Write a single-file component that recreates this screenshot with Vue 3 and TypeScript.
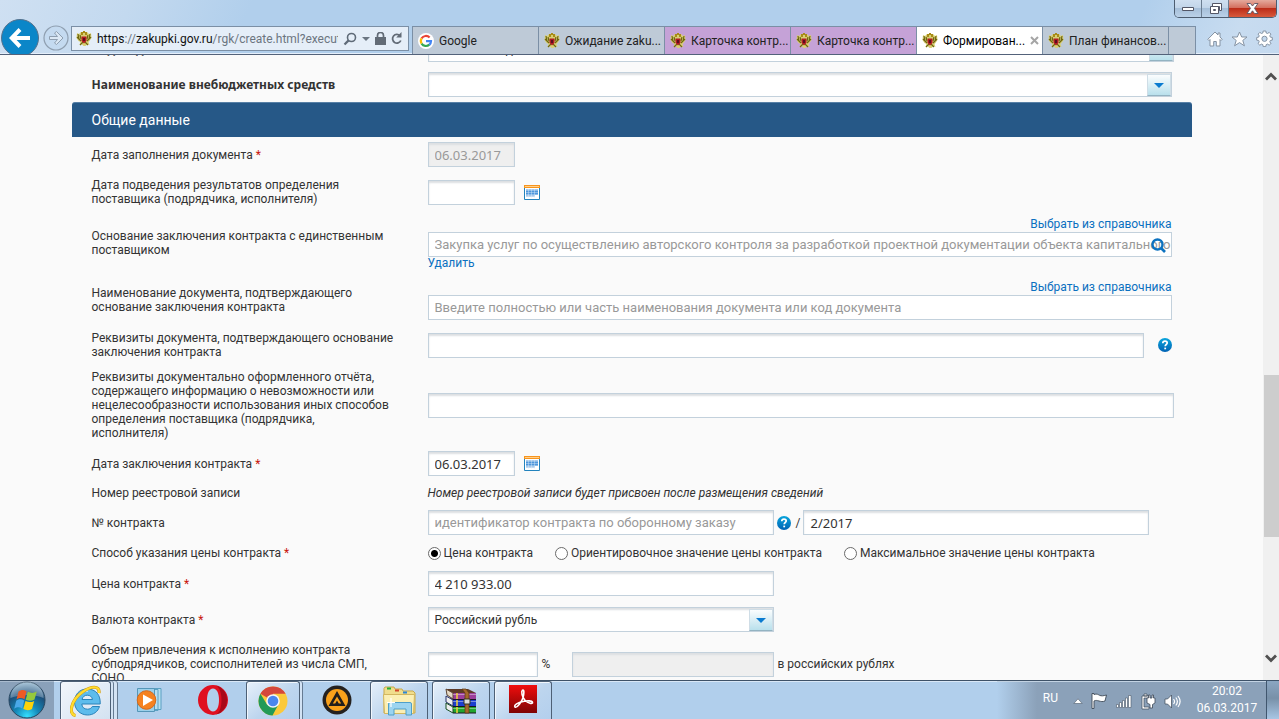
<script setup lang="ts">
import { ref } from 'vue'

interface Tab {
  title: string
  icon: 'google' | 'eagle'
  kind: 'plain' | 'grouped' | 'active'
}

const tabs: Tab[] = [
  { title: 'Google', icon: 'google', kind: 'plain' },
  { title: 'Ожидание zaku...', icon: 'eagle', kind: 'plain' },
  { title: 'Карточка контр...', icon: 'eagle', kind: 'grouped' },
  { title: 'Карточка контр...', icon: 'eagle', kind: 'grouped' },
  { title: 'Формирован...', icon: 'eagle', kind: 'active' },
  { title: 'План финансов...', icon: 'eagle', kind: 'plain' },
]

const priceModes = [
  { id: 'exact', text: 'Цена контракта' },
  { id: 'approx', text: 'Ориентировочное значение цены контракта' },
  { id: 'max', text: 'Максимальное значение цены контракта' },
]

const priceMode = ref('exact')
const filledOn = ref('06.03.2017')
const resultsOn = ref('')
const basis = ref('')
const basisDoc = ref('')
const basisDetails = ref('')
const reportDetails = ref('')
const signedOn = ref('06.03.2017')
const defenceId = ref('')
const contractNo = ref('2/2017')
const price = ref('4 210 933.00')
const share = ref('')
const shareSum = ref('')
</script>

<template>
  <div class="screen">
    <svg class="defs" aria-hidden="true">
      <defs>
        <linearGradient id="helpFill" x1="0" y1="0" x2="0" y2="1">
          <stop offset="0" stop-color="#0aa5dc" />
          <stop offset="1" stop-color="#0062b4" />
        </linearGradient>
        <symbol id="eagle" viewBox="0 0 16 16">
          <path d="M1 2l2 1 2-2 2 1h2l2-1 2 2 2-1 .5 5-2 3-1 1 1 3-2-1-2 2h-2l-2-2-2 1 1-3-2-1L.5 7z" fill="#d9cf74" />
          <path d="M2 3l1 5M4 4l1 4M14 3l-1 5M12 4l-1 4M1 6l4 4M15 6l-4 4M4 14l3-3M12 14l-3-3" stroke="#6f6710" stroke-width="1.200" />
          <path d="M5 1h2v3H5zM9 1h2v3H9zM7 0h2v2H7z" fill="#a88c17" />
          <path d="M5.500 5.500h5v4.500L8 12.500 5.500 10z" fill="#b01c22" />
          <path d="M7 7h2v3H7z" fill="#5b0f1e" />
        </symbol>
        <symbol id="google" viewBox="0 0 16 16">
          <circle cx="8" cy="8" r="8" fill="#fff" />
          <path d="M3.600 5.400A5 5 0 0 1 11.600 4.600" fill="none" stroke="#ea4335" stroke-width="2.200" />
          <path d="M3.600 5.400a5 5 0 0 0 0 5.200" fill="none" stroke="#fbbc05" stroke-width="2.200" />
          <path d="M3.600 10.600a5 5 0 0 0 7.700 1" fill="none" stroke="#34a853" stroke-width="2.200" />
          <path d="M8 8.200h5a5 5 0 0 1-1.700 3.600" fill="none" stroke="#4285f4" stroke-width="2.200" />
        </symbol>
        <symbol id="help" viewBox="0 0 14 14">
          <circle cx="7" cy="7" r="7" fill="url(#helpFill)" />
          <path d="M4.800 5.300c0-3 4.400-2.700 4.400-.3 0 1.500-2 1.500-2 3.200" fill="none" stroke="#fff" stroke-width="1.700" />
          <path d="M6.300 9.600h1.800v1.700H6.300z" fill="#fff" />
        </symbol>
        <symbol id="calendar" viewBox="0 0 16 15">
          <path d="M.5.5h15v14H.5z" fill="#fff" stroke="#2383bd" />
          <path d="M0 0h16v3H0z" fill="#f7941d" />
          <path d="M1 1h14v1H1z" fill="#ffd08a" />
          <path d="M2 4h12v2H2zM2 10h9v2H2z" fill="#a9c9ea" />
          <path d="M2 5h12v5H2z" fill="#4f97dc" />
          <path d="M2 7.500h12M2 9.500h12M2 5.500h12M2 11.500h9M4.500 4v9M7.500 4v9M10.500 4v9" stroke="#e4f0fa" stroke-width=".4" />
        </symbol>
      </defs>
    </svg>

    <header class="chrome">
      <div class="caption">
        <div class="window-buttons">
          <button type="button" aria-label="Свернуть">
            <svg width="12" height="6" viewBox="0 0 12 6"><path d="M.5 1.500h11v3H.5z" fill="#fff" stroke="#535666" /></svg>
          </button>
          <button type="button" aria-label="Восстановить">
            <svg width="13" height="12" viewBox="0 0 13 12"><path d="M3.500.5h9v7h-2v-4h-7z" fill="#fff" stroke="#535666" /><path d="M1.500 3.500h8v7h-8z" fill="#fff" stroke="#535666" /><path d="M4.500 6.500h2v1h-2z" fill="#bcd" stroke="#535666" /></svg>
          </button>
          <button type="button" class="close" aria-label="Закрыть">
            <svg width="13" height="11" viewBox="0 0 13 11"><path d="M1 .5h3.500L6.500 3 8.500.5H12L8.500 5.300 12 10.500H8.500L6.500 7.800 4.500 10.500H1L4.500 5.300z" fill="#fff" stroke="#5b5563" stroke-width=".9" /></svg>
          </button>
        </div>
      </div>

      <div class="toolbar">
        <button type="button" class="nav-back" aria-label="Назад">
          <svg width="38" height="38" viewBox="0 0 38 38"><circle cx="19" cy="19" r="18.500" fill="#0b86c8" stroke="#55718c" /><path d="M29 19H12M19 10.500L10.800 19l8.200 8.500" fill="none" stroke="#fff" stroke-width="4" /></svg>
        </button>
        <button type="button" class="nav-forward" aria-label="Вперёд">
          <svg width="26" height="26" viewBox="0 0 26 26"><circle cx="13" cy="13" r="12" fill="#c4daf0" stroke="#8f9fb0" stroke-width="1.200" /><path d="M6.500 11.500h8L11.500 8l2-1.500 6.500 6.500-6.500 6.500-2-1.500 3-3.500h-8z" fill="#dbe8f5" stroke="#8f9fb0" /></svg>
        </button>
        <div class="address">
          <svg class="fav" width="16" height="16"><use href="#eagle" /></svg>
          <span class="url"><b>https</b>://<b>zakupki.gov.ru</b>/rgk/create.html?execut</span>
          <button type="button" aria-label="Поиск"><svg width="14" height="14" viewBox="0 0 14 14"><circle cx="8.500" cy="5.500" r="4" fill="none" stroke="#5f6b78" stroke-width="1.600" /><path d="M5.600 8.400L1.500 12.500" stroke="#5f6b78" stroke-width="2.200" /></svg></button>
          <button type="button" aria-label="Журнал"><svg width="8" height="4" viewBox="0 0 8 4"><path d="M0 0h8L4 4z" fill="#6b7682" /></svg></button>
          <svg width="11" height="13" viewBox="0 0 11 13"><path d="M0 5h11v8H0z" fill="#626b76" /><path d="M2.500 6V3.500a3 3 0 0 1 6 0V6" fill="none" stroke="#626b76" stroke-width="1.700" /></svg>
          <button type="button" aria-label="Обновить"><svg width="12" height="13" viewBox="0 0 12 13"><path d="M9 3.800A4.300 4.300 0 1 0 9.800 8.500" fill="none" stroke="#626b76" stroke-width="1.800" /><path d="M10.500 0v5.500H5.200z" fill="#626b76" /></svg></button>
        </div>
        <nav class="tabs" aria-label="Вкладки">
          <button v-for="(tab, i) in tabs" :key="i" type="button" class="tab" :class="tab.kind">
            <svg class="fav" width="16" height="16"><use :href="'#' + tab.icon" /></svg>
            <span>{{ tab.title }}</span>
            <svg v-if="tab.kind === 'active'" class="tab-close" width="9" height="9" viewBox="0 0 9 9"><path d="M1 1l7 7M8 1L1 8" stroke="#a5a5a5" stroke-width="2" /></svg>
          </button>
          <button type="button" class="tab new-tab" aria-label="Новая вкладка"></button>
        </nav>
        <div class="tools">
          <button type="button" aria-label="Домой"><svg width="16" height="16" viewBox="0 0 16 16"><path d="M8 1L.8 8.300l1.200 1.200 1-1V15h3.700v-4.500h2.600V15H13V8.500l1 1 1.200-1.200L13 6V2h-2v2z" fill="#fff" stroke="#8593a3" /></svg></button>
          <button type="button" aria-label="Избранное"><svg width="17" height="16" viewBox="0 0 17 16"><path d="M8.500 1l2.200 5h5.300l-4.200 3.400 1.600 5.400-4.900-3.200-4.900 3.200 1.600-5.400L1 6h5.300z" fill="#fff" stroke="#8593a3" /></svg></button>
          <button type="button" aria-label="Сервис"><svg width="17" height="17" viewBox="0 0 17 17"><path d="M7.200 1h2.600l.4 2 1.300.5 1.700-1.100 1.700 1.700-1.100 1.700.5 1.300 2 .4v2.600l-2 .4-.5 1.300 1.100 1.700-1.700 1.700-1.700-1.100-1.300.5-.4 2H7.200l-.4-2-1.300-.5-1.700 1.100-1.700-1.700 1.100-1.700-.5-1.300-2-.4V7.500l2-.4.5-1.300-1.100-1.700 1.700-1.700 1.700 1.100L6.800 3z" fill="#fff" stroke="#8593a3" /><circle cx="8.500" cy="8.800" r="2.600" fill="#c3d8ed" stroke="#8593a3" /></svg></button>
        </div>
      </div>
    </header>

    <div class="viewport">
      <main class="page">
        <form class="sheet" @submit.prevent>
          <div class="rows intro">
            <div class="row strong">
              <label for="budget">Вид бюджета</label>
              <div class="picker over"><select id="budget"><option>Местный бюджет</option></select><span class="drop"></span></div>
            </div>
            <div class="row strong">
              <label for="extra">Наименование внебюджетных средств</label>
              <div class="picker"><select id="extra"><option></option></select><span class="drop"></span></div>
            </div>
          </div>

          <h2>Общие данные</h2>

          <div class="rows">
            <div class="row">
              <label for="filled">Дата заполнения документа <i>*</i></label>
              <div class="line"><input id="filled" v-model="filledOn" class="date" type="text" disabled /></div>
            </div>
            <div class="row">
              <label for="results">Дата подведения результатов определения<br />поставщика (подрядчика, исполнителя)</label>
              <div class="line">
                <input id="results" v-model="resultsOn" class="date" type="text" />
                <button type="button" class="bare cal" aria-label="Календарь"><svg width="16" height="15"><use href="#calendar" /></svg></button>
              </div>
            </div>
            <div class="row">
              <label for="basis">Основание заключения контракта с единственным<br />поставщиком</label>
              <div class="stack">
                <a href="#" class="choose">Выбрать из справочника</a>
                <div class="searchable">
                  <input id="basis" v-model="basis" class="flat" type="text" placeholder="Закупка услуг по осуществлению авторского контроля за разработкой проектной документации объекта капитального" />
                  <button type="button" class="bare lens" aria-label="Найти"><svg width="15" height="15" viewBox="0 0 15 15"><circle cx="6.500" cy="6.500" r="5" fill="none" stroke="#0c72c0" stroke-width="2.400" /><path d="M10 10l4 4" stroke="#0c72c0" stroke-width="2.600" /></svg></button>
                </div>
                <a href="#" class="remove">Удалить</a>
              </div>
            </div>
            <div class="row">
              <label for="basisDoc">Наименование документа, подтверждающего<br />основание заключения контракта</label>
              <div class="stack">
                <a href="#" class="choose">Выбрать из справочника</a>
                <input id="basisDoc" v-model="basisDoc" class="flat" type="text" placeholder="Введите полностью или часть наименования документа или код документа" />
              </div>
            </div>
            <div class="row">
              <label for="basisDetails">Реквизиты документа, подтверждающего основание<br />заключения контракта</label>
              <div class="line apart">
                <input id="basisDetails" v-model="basisDetails" class="grow" type="text" />
                <button type="button" class="bare" aria-label="Справка"><svg width="14" height="14"><use href="#help" /></svg></button>
              </div>
            </div>
            <div class="row">
              <label for="report">Реквизиты документально оформленного отчёта,<br />содержащего информацию о невозможности или<br />нецелесообразности использования иных способов<br />определения поставщика (подрядчика,<br />исполнителя)</label>
              <div class="line over"><input id="report" v-model="reportDetails" class="grow" type="text" /></div>
            </div>
            <div class="row">
              <label for="signed">Дата заключения контракта <i>*</i></label>
              <div class="line">
                <input id="signed" v-model="signedOn" class="date" type="text" />
                <button type="button" class="bare cal" aria-label="Календарь"><svg width="16" height="15"><use href="#calendar" /></svg></button>
              </div>
            </div>
            <div class="row compact">
              <span>Номер реестровой записи</span>
              <em>Номер реестровой записи будет присвоен после размещения сведений</em>
            </div>
            <div class="row">
              <label for="contractNo">№ контракта</label>
              <div class="line number">
                <input v-model="defenceId" class="half" type="text" aria-label="Идентификатор контракта по оборонному заказу" placeholder="идентификатор контракта по оборонному заказу" />
                <button type="button" class="bare" aria-label="Справка"><svg width="14" height="14"><use href="#help" /></svg></button>
                <span>/</span>
                <input id="contractNo" v-model="contractNo" class="half" type="text" />
              </div>
            </div>
            <div class="row">
              <span>Способ указания цены контракта <i>*</i></span>
              <div class="radios">
                <label v-for="mode in priceModes" :key="mode.id">
                  <input v-model="priceMode" type="radio" name="mode" :value="mode.id" />
                  <span>{{ mode.text }}</span>
                </label>
              </div>
            </div>
            <div class="row">
              <label for="price">Цена контракта <i>*</i></label>
              <div class="line"><input id="price" v-model="price" class="half" type="text" /></div>
            </div>
            <div class="row">
              <label for="currency">Валюта контракта <i>*</i></label>
              <div class="picker half"><select id="currency"><option>Российский рубль</option></select><span class="drop"></span></div>
            </div>
            <div class="row">
              <label for="share">Объем привлечения к исполнению контракта<br />субподрядчиков, соисполнителей из числа СМП,<br />СОНО</label>
              <div class="line share">
                <input id="share" v-model="share" class="percent" type="text" />
                <span class="unit">%</span>
                <input id="shareSum" v-model="shareSum" class="sum" type="text" disabled />
                <label for="shareSum">в российских рублях</label>
              </div>
            </div>
          </div>
        </form>
      </main>

      <div class="scrollbar">
        <button type="button" aria-label="Вверх"><svg width="12" height="9" viewBox="0 0 12 9"><path d="M1 7.500l5-5 5 5" fill="none" stroke="#505050" stroke-width="2.800" /></svg></button>
        <span class="before"></span>
        <span class="thumb"></span>
        <span class="after"></span>
        <button type="button" aria-label="Вниз"><svg width="12" height="9" viewBox="0 0 12 9"><path d="M1 1.500l5 5 5-5" fill="none" stroke="#505050" stroke-width="2.800" /></svg></button>
      </div>
    </div>

    <footer class="taskbar">
      <button type="button" class="start" aria-label="Пуск">
        <svg width="38" height="38" viewBox="0 0 38 38">
          <defs>
            <radialGradient id="orb" cx=".5" cy=".95" r=".95"><stop offset="0" stop-color="#35e0ff" /><stop offset=".35" stop-color="#1488b8" /><stop offset=".7" stop-color="#1c4f7a" /><stop offset="1" stop-color="#8db4cf" /></radialGradient>
          </defs>
          <circle cx="19" cy="19" r="18" fill="url(#orb)" stroke="#28465f" />
          <path d="M2.500 17a16.500 16.500 0 0 1 33 0c-9-4-23-4-33 0z" fill="#fff" opacity=".28" />
          <path d="M10.500 10.500c3-2 5-2 8-.3l-2 8c-3-1.700-5-1.500-8 .3z" fill="#ee5a24" />
          <path d="M19.800 10.800c3 1.500 6 1.500 9-.3l-2.300 8c-3 1.700-5.500 1.700-8.700.2z" fill="#95c93d" />
          <path d="M8.200 19.800c3-1.900 5-1.900 8-.3l-2 8c-3-1.700-5-1.500-8 .3z" fill="#4aa8e8" />
          <path d="M17.500 20c3 1.500 6 1.500 8.700-.1l-2.200 8c-3 1.700-5.500 1.700-8.700.2z" fill="#fdd20a" />
        </svg>
      </button>

      <div class="apps">
        <button type="button" class="app open lit grouped" aria-label="Internet Explorer">
          <svg width="32" height="32" viewBox="0 0 32 32">
            <path fill-rule="evenodd" d="M17 4C9 4 4.500 10 4.500 17S10 30 17.500 30c6 0 10.300-3.300 12-8.500h-7.200c-1 1.800-2.500 2.700-4.800 2.700-3.400 0-5.500-2-5.700-5.200h18.400C30.700 10 26 4 17 4zm-5 10.500c.7-2.800 2.500-4.300 5.300-4.300s4.600 1.500 5.200 4.300z" fill="#5dbcec" stroke="#2a82b8" />
            <path d="M8 11c2-4 6-5.500 10-5" fill="none" stroke="#c8edff" stroke-width="1.600" />
            <path d="M5.500 30.500C-2 29.500 1 15 12.500 7 21 1 30 0 29 8" fill="none" stroke="#d19a12" stroke-width="3.200" />
            <path d="M5.500 30.500C-2 29.500 1 15 12.500 7 21 1 30 0 29 8" fill="none" stroke="#ffdc2e" stroke-width="2.200" />
          </svg>
        </button>
        <button type="button" class="app" aria-label="Windows Media">
          <svg width="30" height="28" viewBox="0 0 30 28">
            <path d="M14 2.500h11v21H14zM14 3.500h8v21H14z" fill="#b8dff0" stroke="#5ba0c2" />
            <path d="M1.500 2.500h17v23h-17z" fill="#9cd0ea" stroke="#5596b8" />
            <circle cx="10.500" cy="14" r="9.300" fill="#f58220" stroke="#d3691d" />
            <path d="M7 8.500v11.500L17 14z" fill="#fff" />
          </svg>
        </button>
        <button type="button" class="app" aria-label="Opera">
          <svg width="32" height="32" viewBox="0 0 32 32"><path fill-rule="evenodd" d="M16 1a15 15 0 1 0 0 30 15 15 0 0 0 0-30zm0 3.500c4 0 6 5 6 11.500s-2 11.500-6 11.500S10 22.500 10 16 12 4.500 16 4.500z" fill="#e01020" /><path d="M19 1.500a15 15 0 0 1 0 29c4-2 5.500-8 5.500-14.500S23 4 19 1.500z" fill="#a80a18" /></svg>
        </button>
        <button type="button" class="app open grouped" aria-label="Chrome">
          <svg width="30" height="30" viewBox="0 0 30 30">
            <circle cx="15" cy="15" r="14.500" fill="#fbc93b" />
            <path d="M15 15L2.400 7.800A14.500 14.500 0 0 1 27.600 7.800H15z" fill="#d5473b" />
            <path d="M2.400 7.800A14.500 14.500 0 0 0 14.500 29.500L20.500 18.300 9 18.500z" fill="#229a58" />
            <circle cx="15" cy="15" r="6.800" fill="#f4f6f8" /><circle cx="15" cy="15" r="5.300" fill="#4a86ee" />
          </svg>
        </button>
        <button type="button" class="app" aria-label="AIMP">
          <svg width="30" height="30" viewBox="0 0 30 30"><circle cx="15" cy="15" r="14.500" fill="#24211f" /><circle cx="15" cy="15" r="11" fill="#f9a11b" /><path fill-rule="evenodd" d="M15 6l8.500 15H6.500zM15 11.500L10.800 18.500h2.400l1.800-3 1.800 3h2.400z" fill="#221e1b" /></svg>
        </button>
        <button type="button" class="app open" aria-label="Проводник">
          <svg width="34" height="30" viewBox="0 0 34 30">
            <path d="M2 2.500l1-1.500h9l1 2h7l1 2h10l2 2v20H2z" fill="#f0dd8c" stroke="#c7a94d" />
            <path d="M5 1.500h4v2H5z" fill="#25b035" /><path d="M13 3.500h4v2h-4z" fill="#d3472c" /><path d="M21 5.500h4v2h-4z" fill="#2b87d8" />
            <path d="M1.500 8.500h31l-1 19h-29z" fill="#fbefb4" stroke="#d3b75f" />
            <path d="M6.500 29V18q0-1.500 1.500-1.500h20q1.500 0 1.500 1.500v11h-5.500v-6h-12v6z" fill="#9cd4f0" stroke="#4e9fc9" />
            <path d="M9 12v9M5 16.500h8" stroke="#fff" stroke-width="1.200" />
          </svg>
        </button>
        <button type="button" class="app open" aria-label="WinRAR">
          <svg width="34" height="28" viewBox="0 0 34 28">
            <path d="M2 2l22 0 8 4v7H8z" fill="#5d3a28" /><path d="M9 6h23v6H9z" fill="#9c3f9c" /><path d="M2 2l7 4v6L3 8z" fill="#e4d8c4" stroke="#5c4634" />
            <path d="M9 13h23v6H9z" fill="#1c3fd0" /><path d="M2 9l7 4v6l-7-4z" fill="#eee" stroke="#252f66" />
            <path d="M9 20h23v6H9z" fill="#21a52e" /><path d="M2 16l7 4v6l-7-4z" fill="#eee" stroke="#174f1e" />
            <path d="M9 12.500h23M9 19.500h23M9 26h23" stroke="#191225" />
            <path d="M9 7.500h23M9 14.500h23M9 21.500h23" stroke="#fff" opacity=".4" />
            <path d="M18 2l3 4v20h4V6l-3-4z" fill="#a5692c" stroke="#5b3611" stroke-width=".7" /><path d="M20 12h6v5h-6z" fill="#ddd" stroke="#332" />
            <path d="M13 6v6M13 13v6M13 20v6" stroke="#f2d23c" stroke-width="1.500" />
          </svg>
        </button>
        <button type="button" class="app open adobe" aria-label="Adobe Reader">
          <svg width="28" height="28" viewBox="0 0 28 28">
            <defs><linearGradient id="adobe" x1="0" y1="0" x2="0" y2="1"><stop offset="0" stop-color="#f00d0d" /><stop offset="1" stop-color="#7f0303" /></linearGradient></defs>
            <path d="M0 0h28v28H0z" fill="url(#adobe)" />
            <path d="M6 22c-1.500-2 3-4.500 8-5.500 4-1 9-1 9.500.8.400 2-4.500 1-7.500-2S12 6.500 13.500 5.200c2-1 1.500 4 .5 7.500S8 23.500 6 22z" fill="none" stroke="#fff" stroke-width="1.600" />
          </svg>
        </button>
      </div>

      <div class="tray">
        <span class="lang">RU</span>
        <svg width="10" height="6" viewBox="0 0 10 6"><path d="M.8 5.500L5 .8l4.200 4.700z" fill="#fff" stroke="#5c6b7b" stroke-width=".7" /></svg>
        <svg width="17" height="16" viewBox="0 0 17 16"><path d="M1 .5h2v1c3-1 4 0 5.500.8 2 .8 3.500.7 7-.3L14 8c-2.500 1-4 .5-6 0C6 7.500 5 7 3 8v7.500H1z" fill="#fff" stroke="#3c4856" stroke-width=".9" /></svg>
        <svg width="16" height="13" viewBox="0 0 16 13"><path d="M.5 9.500h2v3h-2zM3.500 7.500h2v5h-2zM6.500 5.500h2v7h-2zM9.500 3h2v9.500h-2zM12.500.5h2.500v12h-2.500z" fill="#fff" stroke="#4c5968" stroke-width=".6" /></svg>
        <svg width="16" height="17" viewBox="0 0 16 17"><path d="M2 3h7v2H4v9h5v2H2zM4 1h3v2H4z" fill="#fff" stroke="#3c4856" stroke-width=".7" /><path d="M8.500 2h1.500v3h2V2h1.500v3H15v5l-2.500 1.500V15H10v-3.500L7 10V5h1.500z" fill="#fff" stroke="#3c4856" stroke-width=".8" /></svg>
        <svg width="17" height="15" viewBox="0 0 17 15"><path d="M1 5h2.500L7.500 1v13L3.500 10H1z" fill="#fff" stroke="#3c4856" stroke-width=".7" /><path d="M9.500 5q2 2.500 0 5M11.800 3.500q3.200 4 0 8M14 2q4.200 5.500 0 11" fill="none" stroke="#fff" stroke-width="1.200" /></svg>
        <div class="clock"><span>20:02</span><span>06.03.2017</span></div>
        <button type="button" class="desktop" aria-label="Свернуть все окна"></button>
      </div>
    </footer>
  </div>
</template>

<style>
html,
body {
  margin: 0;
  overflow: hidden;
}
</style>

<style scoped>
.screen {
  display: flex;
  flex-direction: column;
  height: 100vh;
  font: 12px/14px Roboto, sans-serif;
  color: #333;
}

.screen * {
  box-sizing: border-box;
}

.defs {
  position: absolute;
  width: 0;
  height: 0;
}

button {
  padding: 0;
  border: 0;
  background: none;
  font: inherit;
  color: inherit;
}

svg {
  display: block;
  flex: none;
}

/* browser frame */
.chrome {
  flex: none;
  background: linear-gradient(115deg, #cfe0f2 0, #c3d9ef 120px, #b1cfec 230px, #b1cfec 88%, #c8dcf0 96%, #c4d9ef 100%);
  border-bottom: 1px solid #53627a;
  box-shadow: inset 0 -1px #e4eefa;
}

.caption {
  display: flex;
  justify-content: flex-end;
  height: 18px;
  padding-right: 2px;
}

.window-buttons {
  display: flex;
  height: 18px;
  border: 1px solid #4d5d70;
  border-top: 0;
  border-radius: 0 0 5px 5px;
  overflow: hidden;
}

.window-buttons button {
  display: grid;
  place-items: center;
  width: 27px;
  border-right: 1px solid #6b7d91;
  background: linear-gradient(#cfdff0 0, #c2d5e9 45%, #a6bfd9 50%, #bbd1e8 100%);
}

.window-buttons .close {
  width: 47px;
  border-right: 0;
  background: linear-gradient(#e5aa9d 0, #d4705f 45%, #bc2d19 50%, #d85a3c 100%);
}

.toolbar {
  display: flex;
  align-items: flex-start;
  height: 36px;
  overflow: hidden;
  padding-right: 6px;
}

.nav-back {
  margin: 1px 4px 0 1px;
}

.nav-forward {
  margin: 7px 2px 0 0;
}

.address {
  display: flex;
  flex: 1;
  align-items: center;
  gap: 5px;
  min-width: 0;
  height: 25px;
  margin: 8px 3px 0 0;
  padding: 0 5px 0 4px;
  border: 1px solid #7b8fa5;
  background: #e5eef8;
}

.url {
  flex: 1;
  overflow: hidden;
  white-space: nowrap;
  color: #6c7580;
}

.url b {
  color: #111;
  font-weight: 400;
}

.tabs {
  display: flex;
  height: 28px;
  margin-top: 8px;
  border-left: 1px solid #7b8fa5;
}

.tab {
  display: flex;
  align-items: center;
  gap: 5px;
  width: 126px;
  padding-left: 5px;
  border: 1px solid #7b8fa5;
  border-width: 1px 1px 0 0;
  background: #becad7;
  color: #222;
  white-space: nowrap;
}

.tab.grouped {
  background: #c5a2d7;
}

.tab.active {
  background: #fff;
  color: #000;
}

.tab-close {
  margin: 0 5px 0 auto;
}

.tab.new-tab {
  width: 27px;
}

.tools {
  display: flex;
  align-items: center;
  gap: 8px;
  margin: 12px 0 0 11px;
}

/* page area */
.viewport {
  display: flex;
  flex: 1;
  min-height: 0;
}

.page {
  flex: 1;
  min-width: 0;
  overflow: hidden;
  background: #fafafa;
}

.sheet {
  max-width: 1120px;
  margin: -18px auto 0;
}

.rows {
  display: grid;
  gap: 11px;
  padding: 5px 20px 20px;
}

.rows.intro {
  gap: 10px;
  padding: 0 20px 5px;
}

.row {
  display: grid;
  grid-template-columns: 336px 1fr;
  align-items: center;
}

.row.strong > label {
  font-family: "Noto Sans", sans-serif;
  font-weight: 700;
}

.row.compact {
  line-height: 12px;
}

.row i {
  color: #c8140a;
  font-style: normal;
}

h2 {
  margin: 0;
  padding: 0 20px;
  border-top: 1px solid #5780a6;
  border-radius: 3px 3px 0 0;
  background: #265887;
  color: #fff;
  font-size: 14px;
  font-weight: 400;
  line-height: 34px;
}

a {
  color: #0b70c0;
  text-decoration: none;
}

input[type='text'],
select {
  width: 100%;
  height: 25px;
  margin: 0;
  padding: 0 0 0 6px;
  border: 1px solid #c3d1dc;
  border-radius: 0;
  background: #fff;
  box-shadow: inset 0 2px 2px #dcdfe2;
  color: #333;
  font: 13px/16px "Noto Sans", sans-serif;
}

input[type='text']:placeholder-shown {
  font-family: Roboto, sans-serif;
}

input[type='text'].flat {
  box-shadow: none;
}

input::placeholder {
  color: #999;
  opacity: 1;
}

input[type='text']:disabled {
  background: #efefef;
  color: #999;
}

select {
  appearance: none;
  font: 12px/14px Roboto, sans-serif;
}

.picker {
  position: relative;
}

.over {
  margin-right: -2px;
}

.drop {
  position: absolute;
  top: 2px;
  right: 1px;
  bottom: 1px;
  width: 24px;
  border: 1px solid #cfdde6;
  border-bottom-color: #93b3c2;
  background: linear-gradient(#fbfdfe, #b9e0ec);
  pointer-events: none;
}

.drop::after {
  content: '';
  position: absolute;
  top: 8px;
  left: 6px;
  border: 5px solid transparent;
  border-top-color: #0a7bd0;
  border-bottom: 0;
}

.line {
  display: flex;
  align-items: center;
}

.line .date {
  width: 87px;
}

.cal {
  margin-left: 9px;
}

.stack {
  display: grid;
}

.choose {
  justify-self: end;
  line-height: 15px;
}

.remove {
  justify-self: start;
  line-height: 12px;
}

.searchable {
  position: relative;
}

.lens {
  position: absolute;
  top: 6px;
  right: 6px;
}

.apart {
  gap: 14px;
}

.line .grow {
  flex: 1;
  min-width: 0;
}

.half,
.line .half {
  width: 346px;
}

.number .bare {
  margin: 0 5px 0 3px;
}

.number span {
  margin-right: 3px;
}

.radios {
  display: flex;
  gap: 22px;
}

.radios label {
  display: flex;
  align-items: center;
  gap: 3px;
}

.radios input {
  appearance: none;
  width: 13px;
  height: 13px;
  margin: 0;
  border: 1px solid #6a6a6a;
  border-radius: 50%;
  background: #fff;
}

.radios input:checked {
  background: radial-gradient(circle, #000 0 3px, #fff 4px);
}

.share .percent {
  width: 110px;
}

.share .sum {
  width: 202px;
  margin-right: 4px;
}

.unit {
  width: 34px;
  padding-left: 4px;
}

.scrollbar {
  display: flex;
  flex: none;
  flex-direction: column;
  width: 16px;
  padding: 17px 0;
  background: #f0f0f0;
}

.scrollbar button {
  display: grid;
  place-items: center;
  height: 9px;
}

.before {
  flex: 294;
}

.thumb {
  flex: 162;
  margin-left: 1px;
  background: #cdcdcd;
}

.after {
  flex: 117;
}

/* taskbar */
.taskbar {
  display: flex;
  flex: none;
  height: 39px;
  border-top: 1px solid #3e5268;
  background: #b1cfec;
  box-shadow: inset 0 1px #d9e8f7;
}

.start {
  display: grid;
  place-items: center;
  width: 54px;
  background: #8aa1ba;
  box-shadow: inset 0 1px #aabccf;
}

.apps {
  display: flex;
  flex: 1;
  gap: 4px;
  padding-left: 6px;
}

.app {
  display: grid;
  place-items: center;
  width: 58px;
}

.app.open {
  border: 1px solid #4d6076;
  border-radius: 3px 3px 0 0;
  border-bottom: 0;
  background: linear-gradient(140deg, #e6f0fa, #bdd5ee 55%, #b3cfed);
  box-shadow: inset 1px 1px #f1f7fd;
}

.app.lit {
  background: linear-gradient(140deg, #f2f6fb, #d3e2f1);
}

.app.adobe {
  padding-bottom: 3px;
}

.app.grouped {
  width: 54px;
  margin-right: 4px;
  box-shadow: inset 1px 1px #f1f7fd, 2px 0 #d3e3f4, 3px 0 #667b92;
}

.app.lit.grouped {
  width: 51px;
  margin-right: 7px;
  box-shadow: inset 1px 1px #f1f7fd, 2px 0 #d3e3f4, 3px 0 #667b92, 6px 0 #d3e3f4, 7px 0 #667b92;
}

.tray {
  display: flex;
  align-items: center;
  gap: 8px;
  padding-left: 46px;
  background: linear-gradient(90deg, #b1cfec 0, #8ba1b9 40px);
  box-shadow: inset 0 1px #c3d3e3;
  color: #fff;
}

.tray > svg {
  margin-top: 2px;
}

.lang {
  margin: 0 7px 4px 0;
}

.clock {
  display: grid;
  width: 76px;
  line-height: 17px;
  text-align: center;
}

.desktop {
  width: 13px;
  height: 38px;
  margin-left: -7px;
  border: 1px solid #40566e;
  border-width: 0 0 0 1px;
  background: linear-gradient(#8ba6c2, #7890a8 45%, #a8c6e4);
}
</style>
